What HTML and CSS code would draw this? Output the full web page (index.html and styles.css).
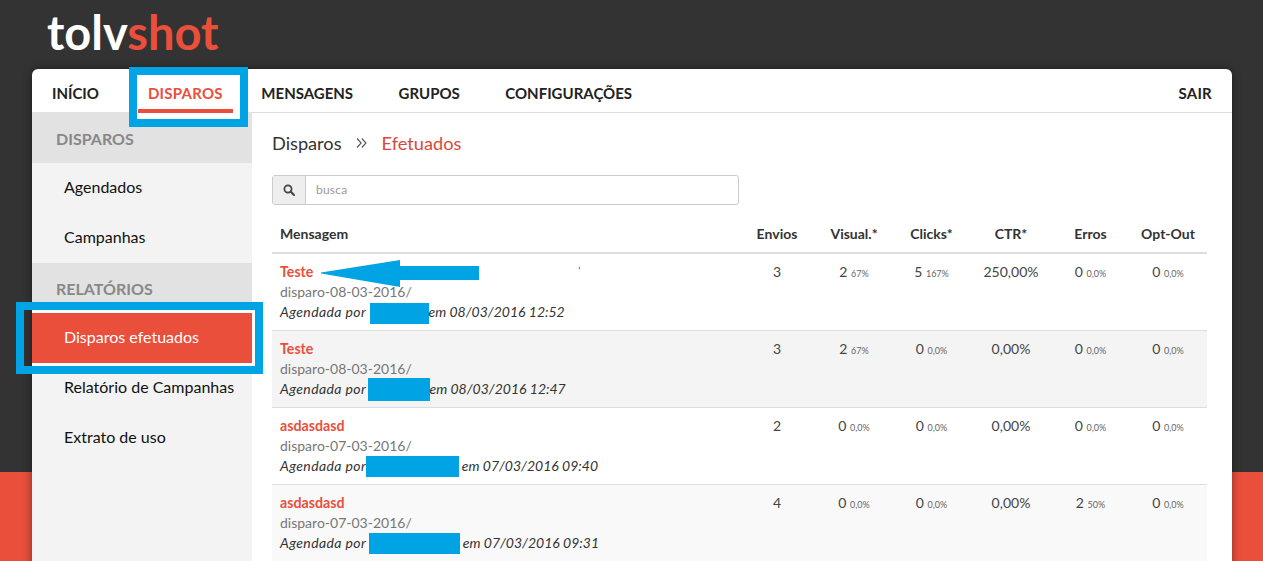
FILE: index.html
```html
<!DOCTYPE html>
<html lang="pt">
<head>
<meta charset="utf-8">
<title>tolvshot</title>
<link rel="stylesheet" href="styles.css">
</head>
<body>
<header class="top"><span class="logo">tolv<b>shot</b></span></header>
<div class="card">
  <nav class="nav">
    <a class="nav-item">INÍCIO</a>
    <a class="nav-item active">DISPAROS</a>
    <a class="nav-item">MENSAGENS</a>
    <a class="nav-item">GRUPOS</a>
    <a class="nav-item">CONFIGURAÇÕES</a>
    <a class="nav-item sair">SAIR</a>
  </nav>
  <div class="body">
    <aside class="side">
      <div class="side-head">DISPAROS</div>
      <a class="side-item">Agendados</a>
      <a class="side-item">Campanhas</a>
      <div class="side-head">RELATÓRIOS</div>
      <a class="side-item current">Disparos efetuados</a>
      <a class="side-item">Relatório de Campanhas</a>
      <a class="side-item">Extrato de uso</a>
    </aside>
    <main class="main">
      <div class="crumbs">
        <span>Disparos</span>
        <svg class="crumb-sep" viewBox="0 0 11 10" width="11" height="10"><path d="M1 0.5L5.2 5L1 9.5M5.8 0.5L10 5L5.8 9.5" fill="none" stroke="#555" stroke-width="1.1"/></svg>
        <span class="crumb-on">Efetuados</span>
      </div>
      <div class="search">
        <span class="search-icon"><svg viewBox="0 0 12 12" width="12" height="12"><circle cx="5" cy="5" r="3.6" fill="none" stroke="#444" stroke-width="1.7"/><path d="M7.8 7.8L11 11" stroke="#444" stroke-width="2" stroke-linecap="round"/></svg></span>
        <span class="search-input">busca</span>
      </div>
      <table class="tbl">
        <colgroup><col class="c-msg"><col class="c-env"><col class="c-vis"><col class="c-cli"><col class="c-ctr"><col class="c-err"><col class="c-opt"></colgroup>
        <thead>
          <tr><th class="left">Mensagem</th><th>Envios</th><th>Visual.*</th><th>Clicks*</th><th>CTR*</th><th>Erros</th><th>Opt-Out</th></tr>
        </thead>
        <tbody>
          <tr>
            <td class="left"><a class="msg">Teste</a><div class="path">disparo-08-03-2016/</div><div class="by"><span class="by-lead">Agendada por</span> <i class="mask m1"></i>em 08/03/2016 12:52</div></td>
            <td>3</td><td>2 <small>67%</small></td><td>5 <small>167%</small></td><td>250,00%</td><td>0 <small>0,0%</small></td><td>0 <small>0,0%</small></td>
          </tr>
          <tr class="shade">
            <td class="left"><a class="msg">Teste</a><div class="path">disparo-08-03-2016/</div><div class="by"><span class="by-lead">Agendada por</span> <i class="mask m2"></i>em 08/03/2016 12:47</div></td>
            <td>3</td><td>2 <small>67%</small></td><td>0 <small>0,0%</small></td><td>0,00%</td><td>0 <small>0,0%</small></td><td>0 <small>0,0%</small></td>
          </tr>
          <tr>
            <td class="left"><a class="msg">asdasdasd</a><div class="path">disparo-07-03-2016/</div><div class="by"><span class="by-lead">Agendada por</span> <i class="mask m3"></i> em 07/03/2016 09:40</div></td>
            <td>2</td><td>0 <small>0,0%</small></td><td>0 <small>0,0%</small></td><td>0,00%</td><td>0 <small>0,0%</small></td><td>0 <small>0,0%</small></td>
          </tr>
          <tr class="shade-light">
            <td class="left"><a class="msg">asdasdasd</a><div class="path">disparo-07-03-2016/</div><div class="by"><span class="by-lead">Agendada por</span> <i class="mask m4"></i> em 07/03/2016 09:31</div></td>
            <td>4</td><td>0 <small>0,0%</small></td><td>0 <small>0,0%</small></td><td>0,00%</td><td>2 <small>50%</small></td><td>0 <small>0,0%</small></td>
          </tr>
        </tbody>
      </table>
    </main>
  </div>
</div>
<div class="mark mark-nav"></div>
<div class="mark mark-side"></div>
<svg class="arrow" viewBox="0 0 262 32" width="262" height="32"><path d="M1 13.5L80 1V7H159V21H80V28L1 14.5Z" fill="#00a3e4"/><path d="M258.5 10L260 7V10Z" fill="#00a3e4"/></svg>
</body>
</html>
```
FILE: styles.css
```css
* { box-sizing: border-box; }
html, body { height: 561px; }
body {
  margin: 0;
  overflow: hidden;
  position: relative;
  font-family: Lato, "Liberation Sans", sans-serif;
  background: linear-gradient(#333 0, #333 472px, #ea4f3c 472px);
  color: #333;
}
.top { height: 69px; padding-left: 47px; }
.logo {
  display: block;
  font-family: Lato, sans-serif;
  font-weight: 700;
  font-size: 47px;
  line-height: 64px;
  color: #fff;
}
.logo b { color: #ea4f3c; font-weight: 700; }
.card {
  margin: 0 31px 0 32px;
  height: 520px;
  background: #fff;
  border-radius: 6px 6px 0 0;
  box-shadow: 0 0 8px rgba(0,0,0,.45);
  overflow: hidden;
}
.nav {
  display: flex;
  height: 43px;
  padding: 14px 20px 0;
  align-items: flex-start;
  font-size: 15px;
  font-weight: 700;
  color: #222;
}
.nav-item { margin-right: 45.5px; line-height: 20px; }
.nav-item.active {
  color: #ea4f3c;
  position: relative;
  margin-left: 3.5px;
  margin-right: 38.5px;
  letter-spacing: .25px;
}
.nav-item.active::before {
  content: "";
  position: absolute;
  left: -11px;
  right: -18px;
  top: 29px;
  height: 7px;
  background: #fff;
}
.nav-item.active::after {
  content: "";
  position: absolute;
  left: -10px;
  right: -10px;
  top: 26px;
  height: 4px;
  background: #ea4f3c;
}
.nav-item.sair { margin-left: auto; margin-right: 0; letter-spacing: .25px; }
.body { display: flex; }
.side { width: 220px; height: 477px; background: #f3f3f3; flex: none; }
.side-head {
  height: 50px;
  padding: 16px 0 0 24px;
  background: #e2e2e2;
  font-size: 16px;
  line-height: 20px;
  font-weight: 700;
  color: #888;
}
.side-head:first-child { height: 51px; padding-top: 17px; }
.side-item {
  display: block;
  height: 50px;
  padding: 14px 0 0 32px;
  font-size: 16px;
  line-height: 20px;
  color: #111;
}
.side-item.current {
  background: #ea4f3c;
  color: #fff;
  box-shadow: 0 0 0 3px #fff;
}
.main { flex: 1; padding: 0 25px 0 20px; border-top: 1px solid #ddd; }
.crumbs {
  display: flex;
  align-items: center;
  height: 62px;
  padding-bottom: 3px;
  font-size: 18.2px;
  color: #333;
}
.crumb-sep { margin: 0 15px 0 14.5px; }
.crumb-on { color: #d9493a; margin-left: -.5px; }
.search {
  display: flex;
  width: 467px;
  height: 30px;
  border: 1px solid #ccc;
  border-radius: 3px;
  font-size: 12px;
  margin-bottom: 10px;
}
.search-icon {
  display: flex;
  width: 33px;
  align-items: center;
  justify-content: center;
  background: #eee;
  border-right: 1px solid #ccc;
}
.search-input { padding-left: 10px; line-height: 28px; color: #999; letter-spacing: .2px; }
.tbl { width: 935px; table-layout: fixed; border-collapse: collapse; font-size: 14px; }
.c-msg { width: 467px; }
.c-env { width: 76px; }
.c-vis { width: 78px; }
.c-cli { width: 77px; }
.c-ctr { width: 82px; }
.c-err { width: 77px; }
.c-opt { width: 78px; }
.tbl th {
  height: 38px;
  font-weight: 700;
  font-size: 14px;
  color: #333;
  border-bottom: 2px solid #ddd;
  padding: 0;
  text-align: center;
}
.tbl td {
  height: 77px;
  padding: 8px 0 0;
  vertical-align: top;
  text-align: center;
  line-height: 20px;
  color: #444;
  border-bottom: 1px solid #ddd;
}
.tbl .left { text-align: left; padding-left: 8px; }
.tbl small { font-size: 9px; color: #666; }
.shade td { background: #f4f4f4; }
.shade-light td { background: #f9f9f9; }
.msg { color: #ea4f3c; font-weight: 700; font-size: 14.2px; }
.path { color: #777; }
.by { color: #333; font-style: italic; }
.by-lead { letter-spacing: .4px; }
.mask { display: inline-block; height: 21px; margin: -3px 0; vertical-align: middle; background: #00a3e4; }
.m1 { width: 59px; }
.m2 { width: 62px; height: 23px; margin-left: -2px; }
.m3 { width: 93px; margin-left: -4px; }
.m4 { width: 91px; margin-left: -1px; }
.mark { position: absolute; border: 8px solid #00a3e4; }
.mark-nav { left: 129px; top: 67px; width: 119px; height: 60px; }
.mark-side { left: 16px; top: 302px; width: 247px; height: 72px; }
.arrow { position: absolute; left: 320px; top: 259px; }
```
